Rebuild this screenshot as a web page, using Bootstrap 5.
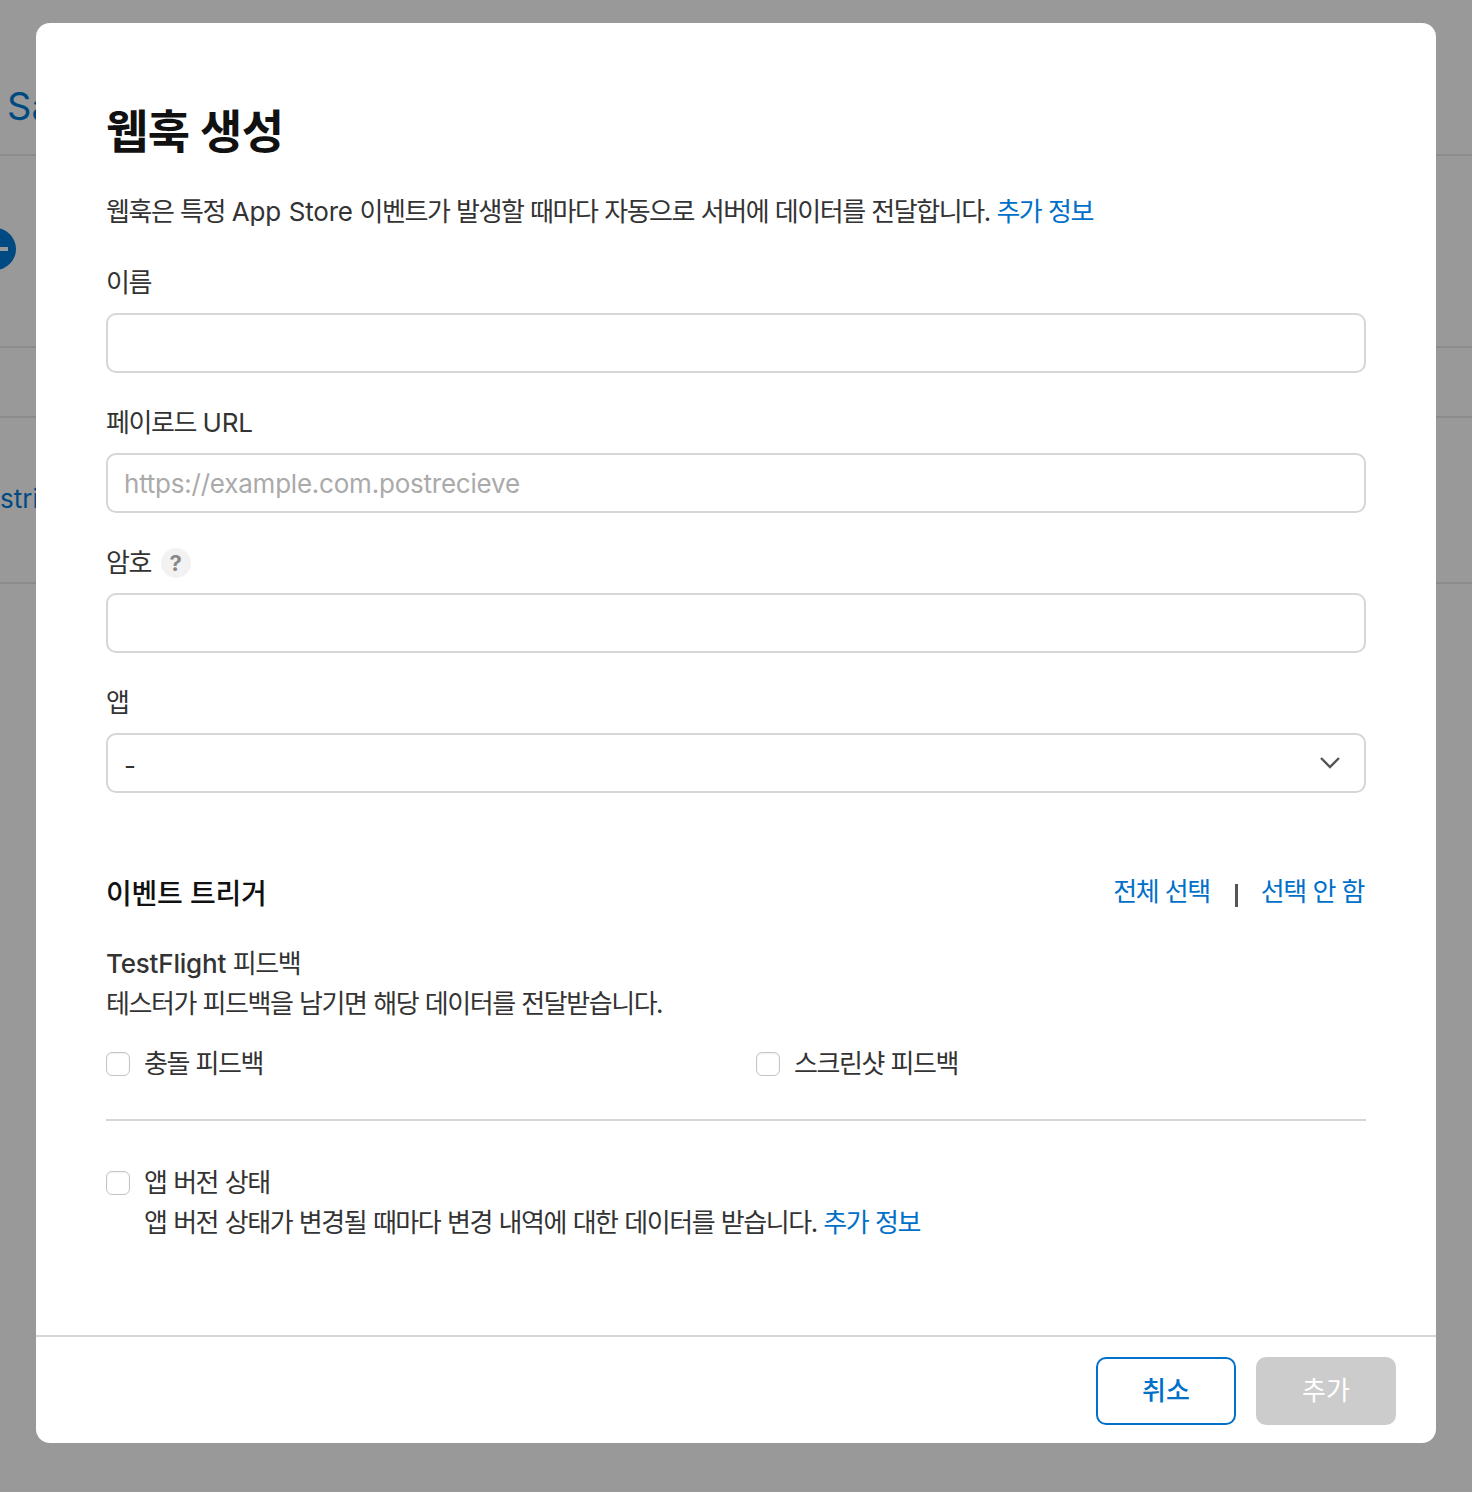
<!DOCTYPE html>
<html lang="ko">
<head>
  <meta charset="UTF-8">
  <meta name="viewport" content="width=device-width, initial-scale=1.0">
  <title>웹훅 생성</title>
  <link href="https://cdn.jsdelivr.net/npm/bootstrap@5.3.0/dist/css/bootstrap.min.css" rel="stylesheet">
  <style>
    html, body {
      height: 100%;
    }
    body {
      background: #999;
      font-family: Inter, "Noto Sans CJK KR", sans-serif;
      font-size: 26px;
      line-height: 40px;
      letter-spacing: -1.45px;
      word-spacing: .8px;
      color: #333;
      overflow: hidden;
    }
    a {
      color: #0070c9;
      text-decoration: none;
    }
    /* 한글 자간과 다른 라틴 글자 */
    .latin-run {
      letter-spacing: -.2px;
    }
    /* 모달 뒤 페이지 */
    .behind {
      position: absolute;
      inset: 0;
      overflow: hidden;
      letter-spacing: 0;
    }
    .behind-line {
      position: absolute;
      left: 0;
      right: 0;
      height: 2px;
      background: #8c8c8c;
    }
    .behind-text {
      position: absolute;
      color: #004a83;
    }
    .behind-title {
      left: 7px;
      top: 82px;
      font-size: 38px;
      line-height: 48px;
    }
    .behind-sub {
      left: 0;
      top: 479px;
    }
    .behind-dot {
      position: absolute;
      left: -26px;
      top: 228px;
      width: 42px;
      height: 42px;
      border-radius: 50%;
      background: #004a83;
    }
    .behind-dot::after {
      content: "";
      position: absolute;
      left: 26px;
      top: 19px;
      width: 8px;
      height: 4px;
      background: #999;
    }
    .sheet {
      position: relative;
      width: 1400px;
      height: 1420px;
      margin: 23px 0 0 36px;
      background: #fff;
      border-radius: 14px;
    }
    .sheet-body {
      padding: 75px 70px 0;
      flex: 1 1 auto;
    }
    .sheet-title {
      font-size: 46px;
      line-height: 66px;
      font-weight: 700;
      letter-spacing: -.5px;
      word-spacing: 0;
      color: #111;
      margin: 0 0 28px;
    }
    .intro {
      margin-bottom: 31px;
    }
    .field {
      margin-bottom: 30px;
    }
    .field-label {
      display: block;
      margin-bottom: 10px;
      line-height: 40px;
      height: 40px;
    }
    .form-control.field-box,
    .form-select.field-box {
      height: 60px;
      border: 2px solid #d6d6d6;
      border-radius: 10px;
      padding: 0 16px;
      font-size: 26px;
      line-height: 56px;
      letter-spacing: -.22px;
      color: #333;
      box-shadow: none;
    }
    .form-control.field-box::placeholder {
      color: #aaa;
    }
    .form-select.field-box {
      padding-top: 3px;
      background-image: url("data:image/svg+xml,%3csvg xmlns='http://www.w3.org/2000/svg' viewBox='0 0 20 12'%3e%3cpath fill='none' stroke='%23555' stroke-width='2.4' d='M1 1l9 9 9-9'/%3e%3c/svg%3e");
      background-size: 20px 12px;
      background-position: right 24px center;
    }
    .hint-dot {
      display: inline-flex;
      align-items: center;
      justify-content: center;
      width: 30px;
      height: 30px;
      margin-left: 3px;
      border-radius: 50%;
      background: #f2f2f2;
      color: #888;
      font-size: 22px;
      font-weight: 700;
      line-height: 1;
      letter-spacing: 0;
      vertical-align: 1px;
    }
    .trigger-head {
      margin-top: 79px;
      height: 44px;
    }
    .trigger-title {
      font-size: 28px;
      line-height: 44px;
      font-weight: 500;
      letter-spacing: -.2px;
      word-spacing: 0;
      color: #111;
      margin: 0;
    }
    .trigger-links {
      margin-right: 2px;
    }
    .pipe {
      display: inline-block;
      width: 3px;
      height: 23px;
      margin: 0 23px 0 25px;
      background: #555;
      vertical-align: -6px;
    }
    .group-title {
      margin-top: 28px;
    }
    .group-title .latin-run {
      font-weight: 500;
    }
    .tick-row {
      margin-top: 20px;
    }
    .tick-col {
      width: 650px;
    }
    .form-check.tick {
      padding-left: 38px;
      margin: 0;
      min-height: 40px;
    }
    .form-check.tick .form-check-input {
      width: 24px;
      height: 24px;
      margin: 8px 0 0 -38px;
      border: 1px solid #c4c4c4;
      border-radius: 6px;
      box-shadow: inset 0 1px 2px rgba(0, 0, 0, .06);
    }
    .rule {
      height: 2px;
      background: #d6d6d6;
      margin: 35px 0 42px;
    }
    .sheet-foot {
      height: 108px;
      border-top: 2px solid #d6d6d6;
      padding: 20px 40px 0;
      column-gap: 20px;
    }
    .btn.foot-btn {
      width: 140px;
      height: 68px;
      font-size: 26px;
      line-height: 1;
      border-radius: 10px;
      border-width: 2px;
    }
    .btn.foot-cancel {
      border-color: #0070c9;
      color: #0070c9;
      background: #fff;
      font-weight: 500;
    }
    .btn.foot-add,
    .btn.foot-add:disabled {
      border-color: #ccc;
      background: #ccc;
      color: #fff;
      opacity: 1;
    }
  </style>
</head>
<body>
  <div class="behind">
    <div class="behind-line" style="top: 154px"></div>
    <div class="behind-line" style="top: 346px"></div>
    <div class="behind-line" style="top: 416px"></div>
    <div class="behind-line" style="top: 582px"></div>
    <div class="behind-text behind-title">Sales</div>
    <div class="behind-dot"></div>
    <div class="behind-text behind-sub">strings</div>
  </div>

  <div class="sheet d-flex flex-column">
    <div class="sheet-body">
      <h1 class="sheet-title">웹훅 생성</h1>
      <p class="intro">웹훅은 특정 <span class="latin-run">App Store</span> 이벤트가 발생할 때마다 자동으로 서버에 데이터를 전달합니다. <a href="#">추가 정보</a></p>

      <div class="field">
        <label class="field-label" for="hookName">이름</label>
        <input type="text" class="form-control field-box" id="hookName">
      </div>
      <div class="field">
        <label class="field-label" for="hookUrl">페이로드 <span class="latin-run">URL</span></label>
        <input type="text" class="form-control field-box" id="hookUrl" placeholder="https://example.com.postrecieve">
      </div>
      <div class="field">
        <label class="field-label" for="hookSecret">암호 <span class="hint-dot">?</span></label>
        <input type="text" class="form-control field-box" id="hookSecret">
      </div>
      <div class="field">
        <label class="field-label" for="hookApp">앱</label>
        <select class="form-select field-box" id="hookApp">
          <option>-</option>
        </select>
      </div>

      <div class="trigger-head d-flex justify-content-between align-items-start">
        <h2 class="trigger-title">이벤트 트리거</h2>
        <div class="trigger-links"><a href="#">전체 선택</a><span class="pipe"></span><a href="#">선택 안 함</a></div>
      </div>

      <div class="group-title"><span class="latin-run">TestFlight</span> 피드백</div>
      <div>테스터가 피드백을 남기면 해당 데이터를 전달받습니다.</div>
      <div class="tick-row d-flex">
        <div class="form-check tick tick-col">
          <input class="form-check-input" type="checkbox" id="crashFeedback">
          <label class="form-check-label" for="crashFeedback">충돌 피드백</label>
        </div>
        <div class="form-check tick">
          <input class="form-check-input" type="checkbox" id="shotFeedback">
          <label class="form-check-label" for="shotFeedback">스크린샷 피드백</label>
        </div>
      </div>

      <div class="rule"></div>

      <div class="form-check tick">
        <input class="form-check-input" type="checkbox" id="versionState">
        <label class="form-check-label" for="versionState">앱 버전 상태</label>
        <div>앱 버전 상태가 변경될 때마다 변경 내역에 대한 데이터를 받습니다. <a href="#">추가 정보</a></div>
      </div>
    </div>

    <div class="sheet-foot d-flex justify-content-end">
      <button type="button" class="btn foot-btn foot-cancel">취소</button>
      <button type="button" class="btn foot-btn foot-add" disabled>추가</button>
    </div>
  </div>

  <script src="https://cdn.jsdelivr.net/npm/bootstrap@5.3.0/dist/js/bootstrap.bundle.min.js"></script>
</body>
</html>
